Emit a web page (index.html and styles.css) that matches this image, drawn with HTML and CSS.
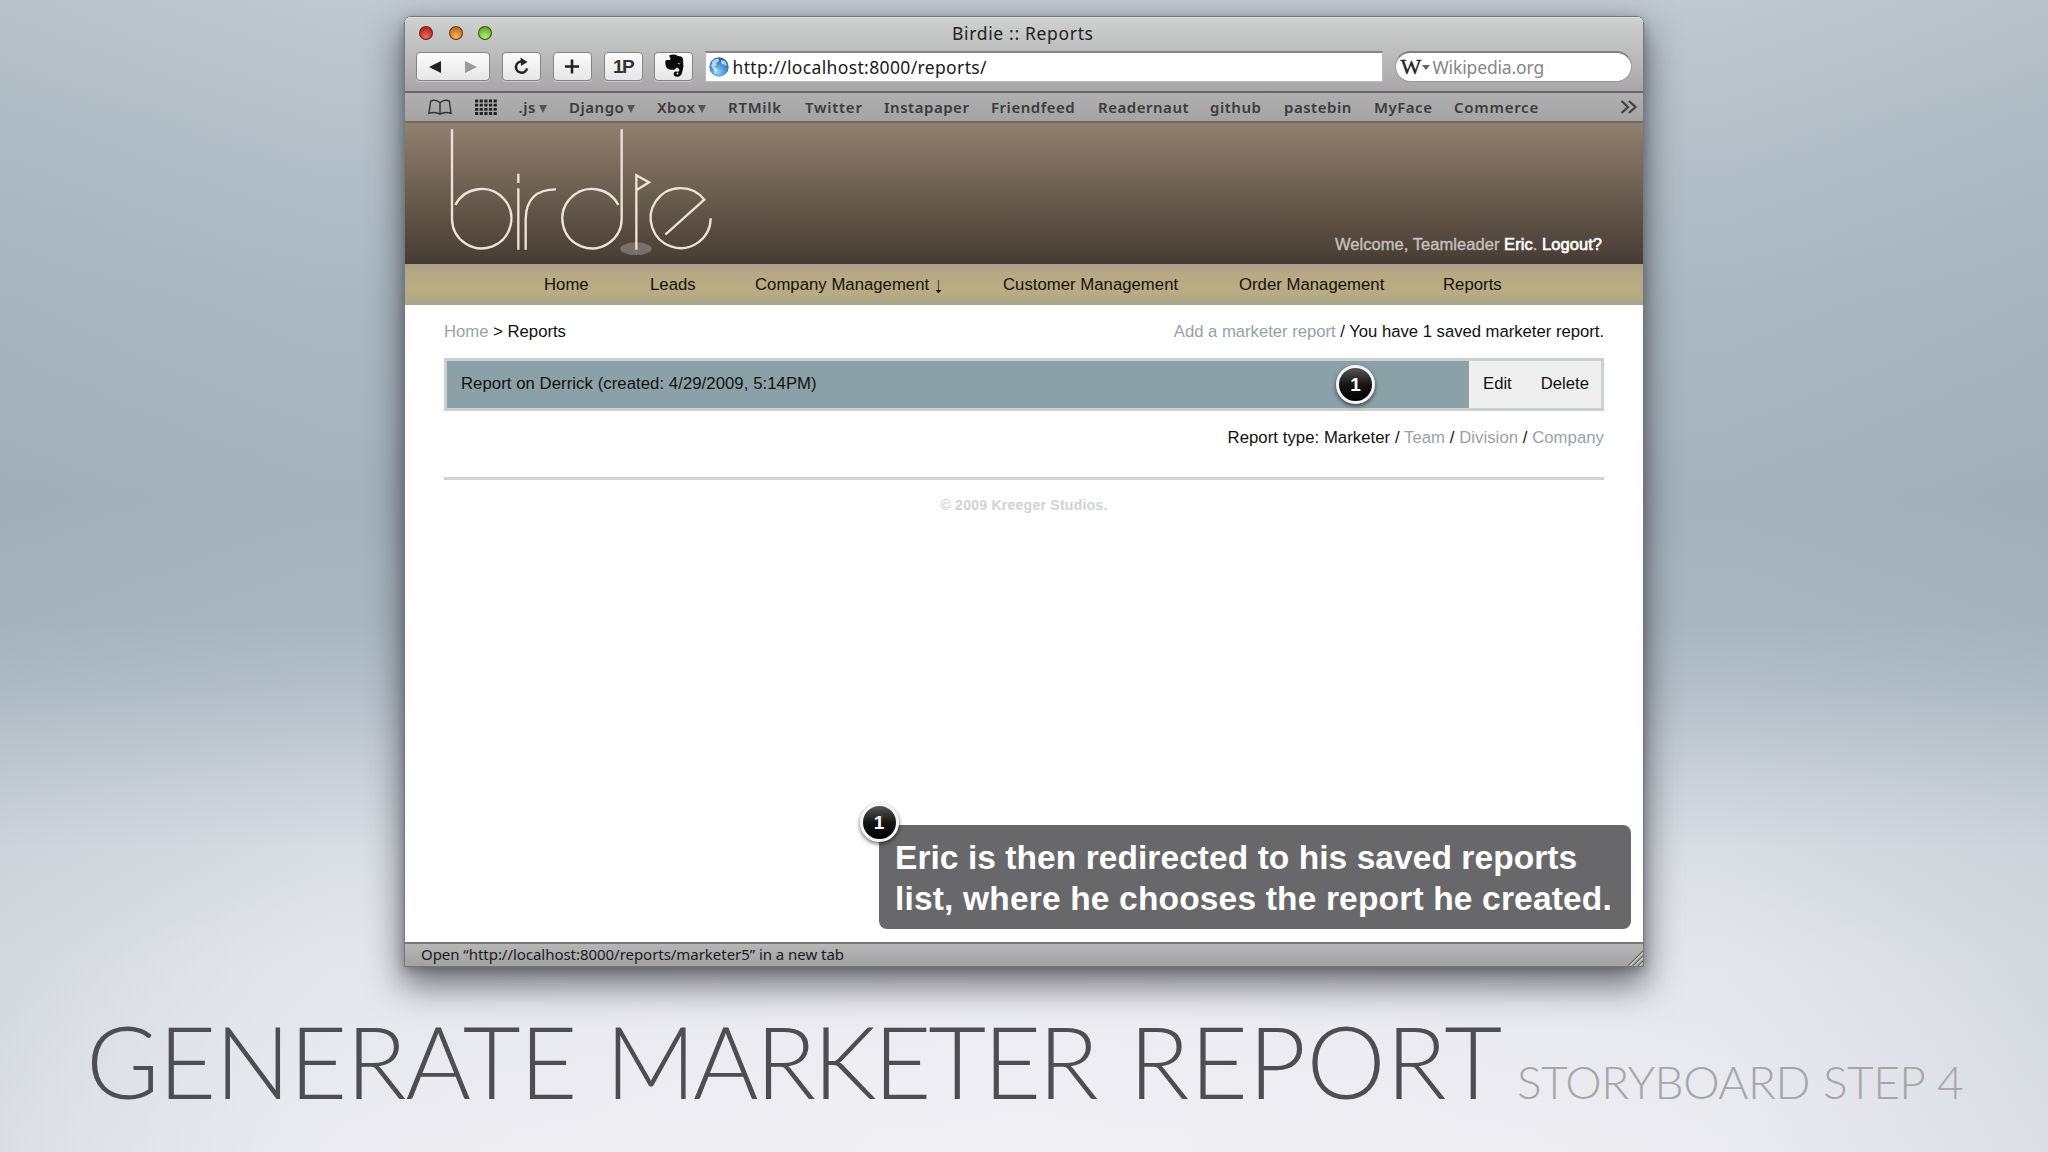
FILE: index.html
```
<!DOCTYPE html>
<html lang="en">
<head>
<meta charset="utf-8">
<title>Generate Marketer Report</title>
<link rel="stylesheet" href="styles.css">
</head>
<body>
<div class="slide">
  <div class="window">
    <div class="toolbar">
      <div class="titlebar">
        <div class="lights"><i class="light red"></i><i class="light amber"></i><i class="light green"></i></div>
        <div class="window-title">Birdie :: Reports</div>
      </div>
      <div class="controls">
        <div class="btn nav-btn">
          <svg width="74" height="28" viewBox="0 0 74 28"><path d="M25 9v12L13 15z" fill="#222"/><path d="M49 9v12l12-6z" fill="#999"/></svg>
        </div>
        <div class="btn reload">
          <svg width="38" height="28" viewBox="0 0 38 28"><path d="M20 9.500a5.600 5.600 0 1 0 5 7" fill="none" stroke="#222" stroke-width="2.600"/><path d="M18.500 5.500l7 4.500-6.500 4z" fill="#222"/></svg>
        </div>
        <div class="btn add">
          <svg width="38" height="28" viewBox="0 0 38 28"><path d="M19 7.500v14M12 14.500h14" stroke="#222" stroke-width="2.600"/></svg>
        </div>
        <div class="btn onep">1P</div>
        <div class="btn clip">
          <svg width="38" height="28" viewBox="0 0 38 28"><path d="M15 3.500q5-2 9 .5 4.500 0 5 3 1 7-.5 12-1 6-5.500 5.800c-4 0-4.500-4.800-1-5.300l2 .2c2-.2 1.500-2.300.5-3.200-1-.8-2-.5-2.500-1-.5 2.500-2 2.500-4 2.200-3.500-.2-6-1-6.500-5.500-.4-2.300-.3-4 1-4.200h3q1-.2 1-1.500z" fill="#0b0b0b"/><path d="M23.500 11.500q2-1.200 2.500 1z" fill="#ddd"/><circle cx="23.500" cy="21.500" r="1" fill="#ddd"/></svg>
        </div>
        <div class="address">
          <svg width="22" height="22" viewBox="0 0 22 22"><defs><radialGradient id="globe" cx=".45" cy=".75" r=".8"><stop offset="0" stop-color="#8ed0f4"/><stop offset=".6" stop-color="#3b82c8"/><stop offset="1" stop-color="#24549a"/></radialGradient></defs><circle cx="11" cy="11" r="9.700" fill="url(#globe)"/><path d="M4.500 5q3-3 6-2.500l.5 2.500-3 2.500 1 2-3 .5 3.500 3-1 4.500-2 .5-.5-4.500-3-3.500zM13 4l4 1 2 4-2 1-1-2-2 .5-1-2z" fill="#e4f2fb" opacity=".7"/></svg>
          <span>http://localhost:8000/reports/</span>
        </div>
        <div class="search"><b>W</b><svg width="8" height="5" viewBox="0 0 8 5"><path d="M0 0h8L4 5z" fill="#666"/></svg><span>Wikipedia.org</span></div>
      </div>
    </div>
    <div class="bookmarks">
      <svg width="24" height="17" viewBox="0 0 25 17"><path d="M12.500 3.500Q8-.5 2.800 1.800L1 14.500Q8 12.500 12.500 15.500 17 12.500 24 14.500L22.200 1.800Q17-.5 12.500 3.500zV15" fill="none" stroke="#333" stroke-width="1.500"/></svg>
      <svg width="23" height="16" viewBox="0 0 23 16"><path d="M0 2h22M0 6.200h22M0 10.400h22M0 14.500h22" stroke="#222" stroke-width="2.800" stroke-dasharray="3.200 1.450"/></svg>
      <span>.js<i class="caret"></i></span><span>Django<i class="caret"></i></span><span>Xbox<i class="caret"></i></span><span class="wide">RTMilk</span><span class="wide">Twitter</span><span>Instapaper</span><span>Friendfeed</span><span>Readernaut</span><span>github</span><span>pastebin</span><span>MyFace</span><span class="wide">Commerce</span>
      <svg width="18" height="14" viewBox="0 0 18 14"><path d="M1.500 1l6.500 6-6.500 6M9 1l6.500 6L9 13" fill="none" stroke="#444" stroke-width="2.300"/></svg>
    </div>
    <div class="masthead">
      <svg class="logo" width="270" height="130" viewBox="145 22 810 390" fill="none" stroke="#efe2d8" stroke-width="7" stroke-linecap="butt">
        <ellipse cx="709" cy="387" rx="47" ry="19" fill="#7a706a" stroke="none"/>
        <path d="M157 29V298A89 89 0 1 0 167 256"/>
        <path d="M356 162V190M356 206V390"/>
        <path d="M378 390V298Q380 209 469 209"/>
        <path d="M666 29V298A89 89 0 1 1 656 256"/>
        <path d="M710 390V167L748 188 712 210"/>
        <path d="M797 345L914 240A90 90 0 1 0 933 296"/>
      </svg>
      <div class="welcome">Welcome, Teamleader <b>Eric</b>. <b>Logout?</b></div>
    </div>
    <div class="menu"><span>Home</span><span>Leads</span><span>Company Management <svg width="7" height="14" viewBox="0 0 7 14"><path d="M3.500 0v11" stroke="#5a5130" stroke-width="1.200"/><path d="M.7 10h5.600l-2.800 3.600z" fill="#111"/></svg></span><span>Customer Management</span><span>Order Management</span><span>Reports</span></div>
    <div class="content">
      <div class="crumbs"><div><a>Home</a> &gt; Reports</div><div class="summary"><a>Add a marketer report</a> / You have 1 saved marketer report.</div></div>
      <div class="report">
        <div class="report-name">Report on Derrick (created: 4/29/2009, 5:14PM)<span class="badge row-badge">1</span></div>
        <div class="actions"><span>Edit</span><span>Delete</span></div>
      </div>
      <div class="types">Report type: Marketer / <a>Team</a> / <a>Division</a> / <a>Company</a></div>
      <div class="footer">© 2009 Kreeger Studios.</div>
    </div>
    <div class="statusbar"><span>Open “http://localhost:8000/reports/marketer5” in a new tab</span>
      <svg width="16" height="16" viewBox="0 0 16 16"><path d="M1 16L16 1M6 16L16 6M11 16l5-5" stroke="#666" stroke-width="1.200"/><path d="M2.500 16L16 2.500M7.500 16L16 7.500M12.500 16l3.500-3.500" stroke="#ddd" stroke-width="1"/></svg>
    </div>
    <div class="callout"><span class="badge callout-badge">1</span><div class="line1">Eric is then redirected to his saved reports</div><div class="line2">list, where he chooses the report he created.</div></div>
  </div>
  <div class="caption"><h1><span class="w1">GENERATE</span> <span class="w2">MARKETER</span> <span class="w3">REPORT</span></h1><h2>STORYBOARD STEP 4</h2></div>
</div>
</body>
</html>
```
FILE: styles.css
```
* { box-sizing: border-box; }
body { margin: 0; }
.slide {
  width: 2048px; height: 1152px; overflow: hidden; padding: 16px 0 0 404px;
  background:
    radial-gradient(ellipse 1100px 380px at 1024px 1152px, rgba(244,242,247,.7), rgba(244,242,247,0)),
    linear-gradient(90deg, rgba(140,158,166,.16), rgba(140,158,166,0) 16%, rgba(140,158,166,0) 84%, rgba(140,158,166,.16)),
    linear-gradient(180deg, #c0c8d1 0, #b6c1ca 120px, #abb8c2 300px, #a5b2bd 500px, #a9b6c0 620px, #b4bfc9 690px, #c8cfd8 770px, #d9dde4 850px, #e2e4ea 960px, #e8e9ee 1152px);
  font-family: "Liberation Sans", Arial, sans-serif;
}
.window {
  position: relative; width: 1240px; height: 951px; display: flex; flex-direction: column;
  border-radius: 7px 7px 0 0; border: 1px solid #76797c; background: #fff;
  box-shadow: 0 16px 34px 2px rgba(45,45,50,.66), 0 3px 10px rgba(50,50,60,.3);
}
.toolbar { height: 76px; background: linear-gradient(#cfd1d1, #c2c3c3 32%, #a8a6a8); border-radius: 6px 6px 0 0; border-bottom: 2px solid #68676a; border-top: 1px solid #dcdede; }
.titlebar { height: 33px; display: flex; align-items: center; }
.lights { width: 500px; display: flex; gap: 15.500px; padding-left: 14px; margin-top: -4px; }
.light { width: 14px; height: 14px; border-radius: 50%; border: 1px solid rgba(60,30,20,.75); }
.red { background: radial-gradient(circle at 50% 80%, #ee6a60, #c3271f 70%); }
.amber { background: radial-gradient(circle at 50% 80%, #f5b562, #c8711d 70%); }
.green { background: radial-gradient(circle at 50% 80%, #b6f070, #5fb52a 70%); }
.window-title { font: 17.500px/24px "Noto Sans", sans-serif; letter-spacing: .66px; color: #222; margin: -4px 0 0 47px; }
.controls { display: flex; height: 31px; padding-left: 11px; }
.btn { height: 29px; margin-top: 1px; border: 1px solid #858585; border-radius: 4px; background: linear-gradient(#fbfbfb, #e6e6e6); box-shadow: 0 1px 0 #ccc; overflow: hidden; }
.btn svg { display: block; margin: -1px 0 0 -1px; }
.nav-btn { width: 74px; }
.reload { width: 39px; margin-left: 12px; }
.add { width: 39px; margin-left: 12px; }
.onep { width: 39px; margin-left: 11.500px; font: bold 19px/28px "Liberation Sans", sans-serif; letter-spacing: -1.500px; color: #333; text-align: center; }
.clip { width: 39px; margin-left: 11.500px; }
.address { width: 678px; height: 31px; margin-left: 11.500px; padding-left: 2px; display: flex; align-items: center; background: #fff; border: 1px solid #bbb; border-top: 2px solid #858585; font: 17.500px/26px "Noto Sans", sans-serif; letter-spacing: .36px; color: #1a1a1a; }
.address span { margin-left: 3px; }
.search { width: 237px; height: 31px; margin-left: 12px; padding-left: 5px; display: flex; align-items: center; border-radius: 16px; background: #fff; border: 1px solid #999; border-top: 2px solid #808080; font: 17.500px/26px "Noto Sans", sans-serif; letter-spacing: -.15px; color: #868686; }
.search b { font: 22px/26px "Liberation Serif", serif; color: #222; width: 21px; -webkit-text-stroke: .4px #222; }
.search span { margin-left: 3px; }
.bookmarks {
  height: 30px; padding-left: 23px; display: grid; align-items: center;
  grid-template-columns: 47px 43.500px 50.500px 88px 71px 77px 79px 107px 107px 112px 74px 90px 80px 166px 20px;
  background: linear-gradient(#b0afb1, #a3a4a2); border-bottom: 2px solid #6d6a66;
  font: 600 15px/22px "Noto Sans", sans-serif; letter-spacing: .52px; color: #3b3b3d; white-space: nowrap;
}
.bookmarks .wide { letter-spacing: .75px; }
.caret { display: inline-block; border: 4.500px solid transparent; border-top: 8px solid #555; border-bottom: 0; margin-left: 3px; }
.masthead { height: 141px; display: flex; justify-content: space-between; background: linear-gradient(#928070, #6e6153 45%, #473c33); }
.logo { margin: 4px 0 0 42.500px; }
.welcome { margin: 111px 41px 0 0; font-size: 16.500px; line-height: 20px; letter-spacing: .05px; color: #c4bfba; -webkit-text-stroke: .4px #c4bfba; }
.welcome b { font-weight: normal; color: #fff; -webkit-text-stroke: .6px #fff; }
.menu {
  height: 41px; padding-left: 139px; display: grid; align-items: center; grid-template-columns: 106px 105px 248px 236px 204px auto;
  background: linear-gradient(#a9a08b, #b7aa84 28%, #baac82 70%, #a8a48e); font-size: 16.700px; letter-spacing: .04px; color: #15130c; white-space: nowrap;
}
.menu svg { vertical-align: -4px; margin-left: 1px; }
.content { flex: 1; padding: 16px 39px 0 39px; font-size: 16.700px; line-height: 20px; color: #111; }
.content a { color: #94a3a8; }
.crumbs { display: flex; justify-content: space-between; height: 37px; padding-top: 1px; }
.summary { letter-spacing: -.02px; }
.report { display: flex; height: 53px; border: 3px solid #cbd0d1; background: #efefef; }
.report-name { position: relative; width: 1022px; padding: 13px 0 0 14px; background: #8ba1a8; letter-spacing: .07px; }
.actions { display: flex; gap: 29px; padding: 13px 0 0 14px; }
.badge { position: absolute; width: 39px; height: 39px; border-radius: 50%; border: 3px solid #f4f4f4; background: linear-gradient(#555, #161616 50%, #000); box-shadow: 0 2px 4px rgba(0,0,0,.6); color: #fff; font: bold 19px/33px "Liberation Sans", sans-serif; text-align: center; letter-spacing: 0; }
.row-badge { left: 889px; top: 4px; }
.types { margin-top: 17px; text-align: right; letter-spacing: .06px; }
.footer { margin-top: 29px; border-top: 3px solid #d1d3d4; padding-top: 15px; text-align: center; font-weight: bold; font-size: 14px; letter-spacing: .26px; color: #d2d2d6; }
.statusbar { height: 24px; display: flex; justify-content: space-between; align-items: flex-end; background: linear-gradient(#b6b6b7, #a2a2a4); border-top: 2px solid #777; font: 15px/24px "Noto Sans", sans-serif; color: #1b1b22; padding-left: 16px; letter-spacing: -.04px; }
.callout { position: absolute; left: 474px; top: 808px; width: 752px; height: 104px; border-radius: 8px; background: #68686b; padding: 12px 0 0 16px; color: #fff; font-weight: bold; font-size: 33.500px; line-height: 41px; white-space: nowrap; }
.line1 { letter-spacing: .06px; }
.line2 { letter-spacing: .17px; }
.callout-badge { left: -19.500px; top: -22px; }
.caption { display: flex; align-items: baseline; margin: 33px 0 0 -318px; white-space: nowrap; }
.caption h1 { margin: 0; width: 1431px; font: 300 100px/120px Lato, sans-serif; word-spacing: 2px; color: #4e4e52; }
.w1 { letter-spacing: -1.250px; }
.w2 { letter-spacing: -3.100px; }
.w3 { letter-spacing: .4px; margin-left: 4px; }
.caption h2 { margin: 0; font: 300 46px/60px Lato, sans-serif; letter-spacing: -.5px; word-spacing: 1px; color: #a6a6a9; }
```
